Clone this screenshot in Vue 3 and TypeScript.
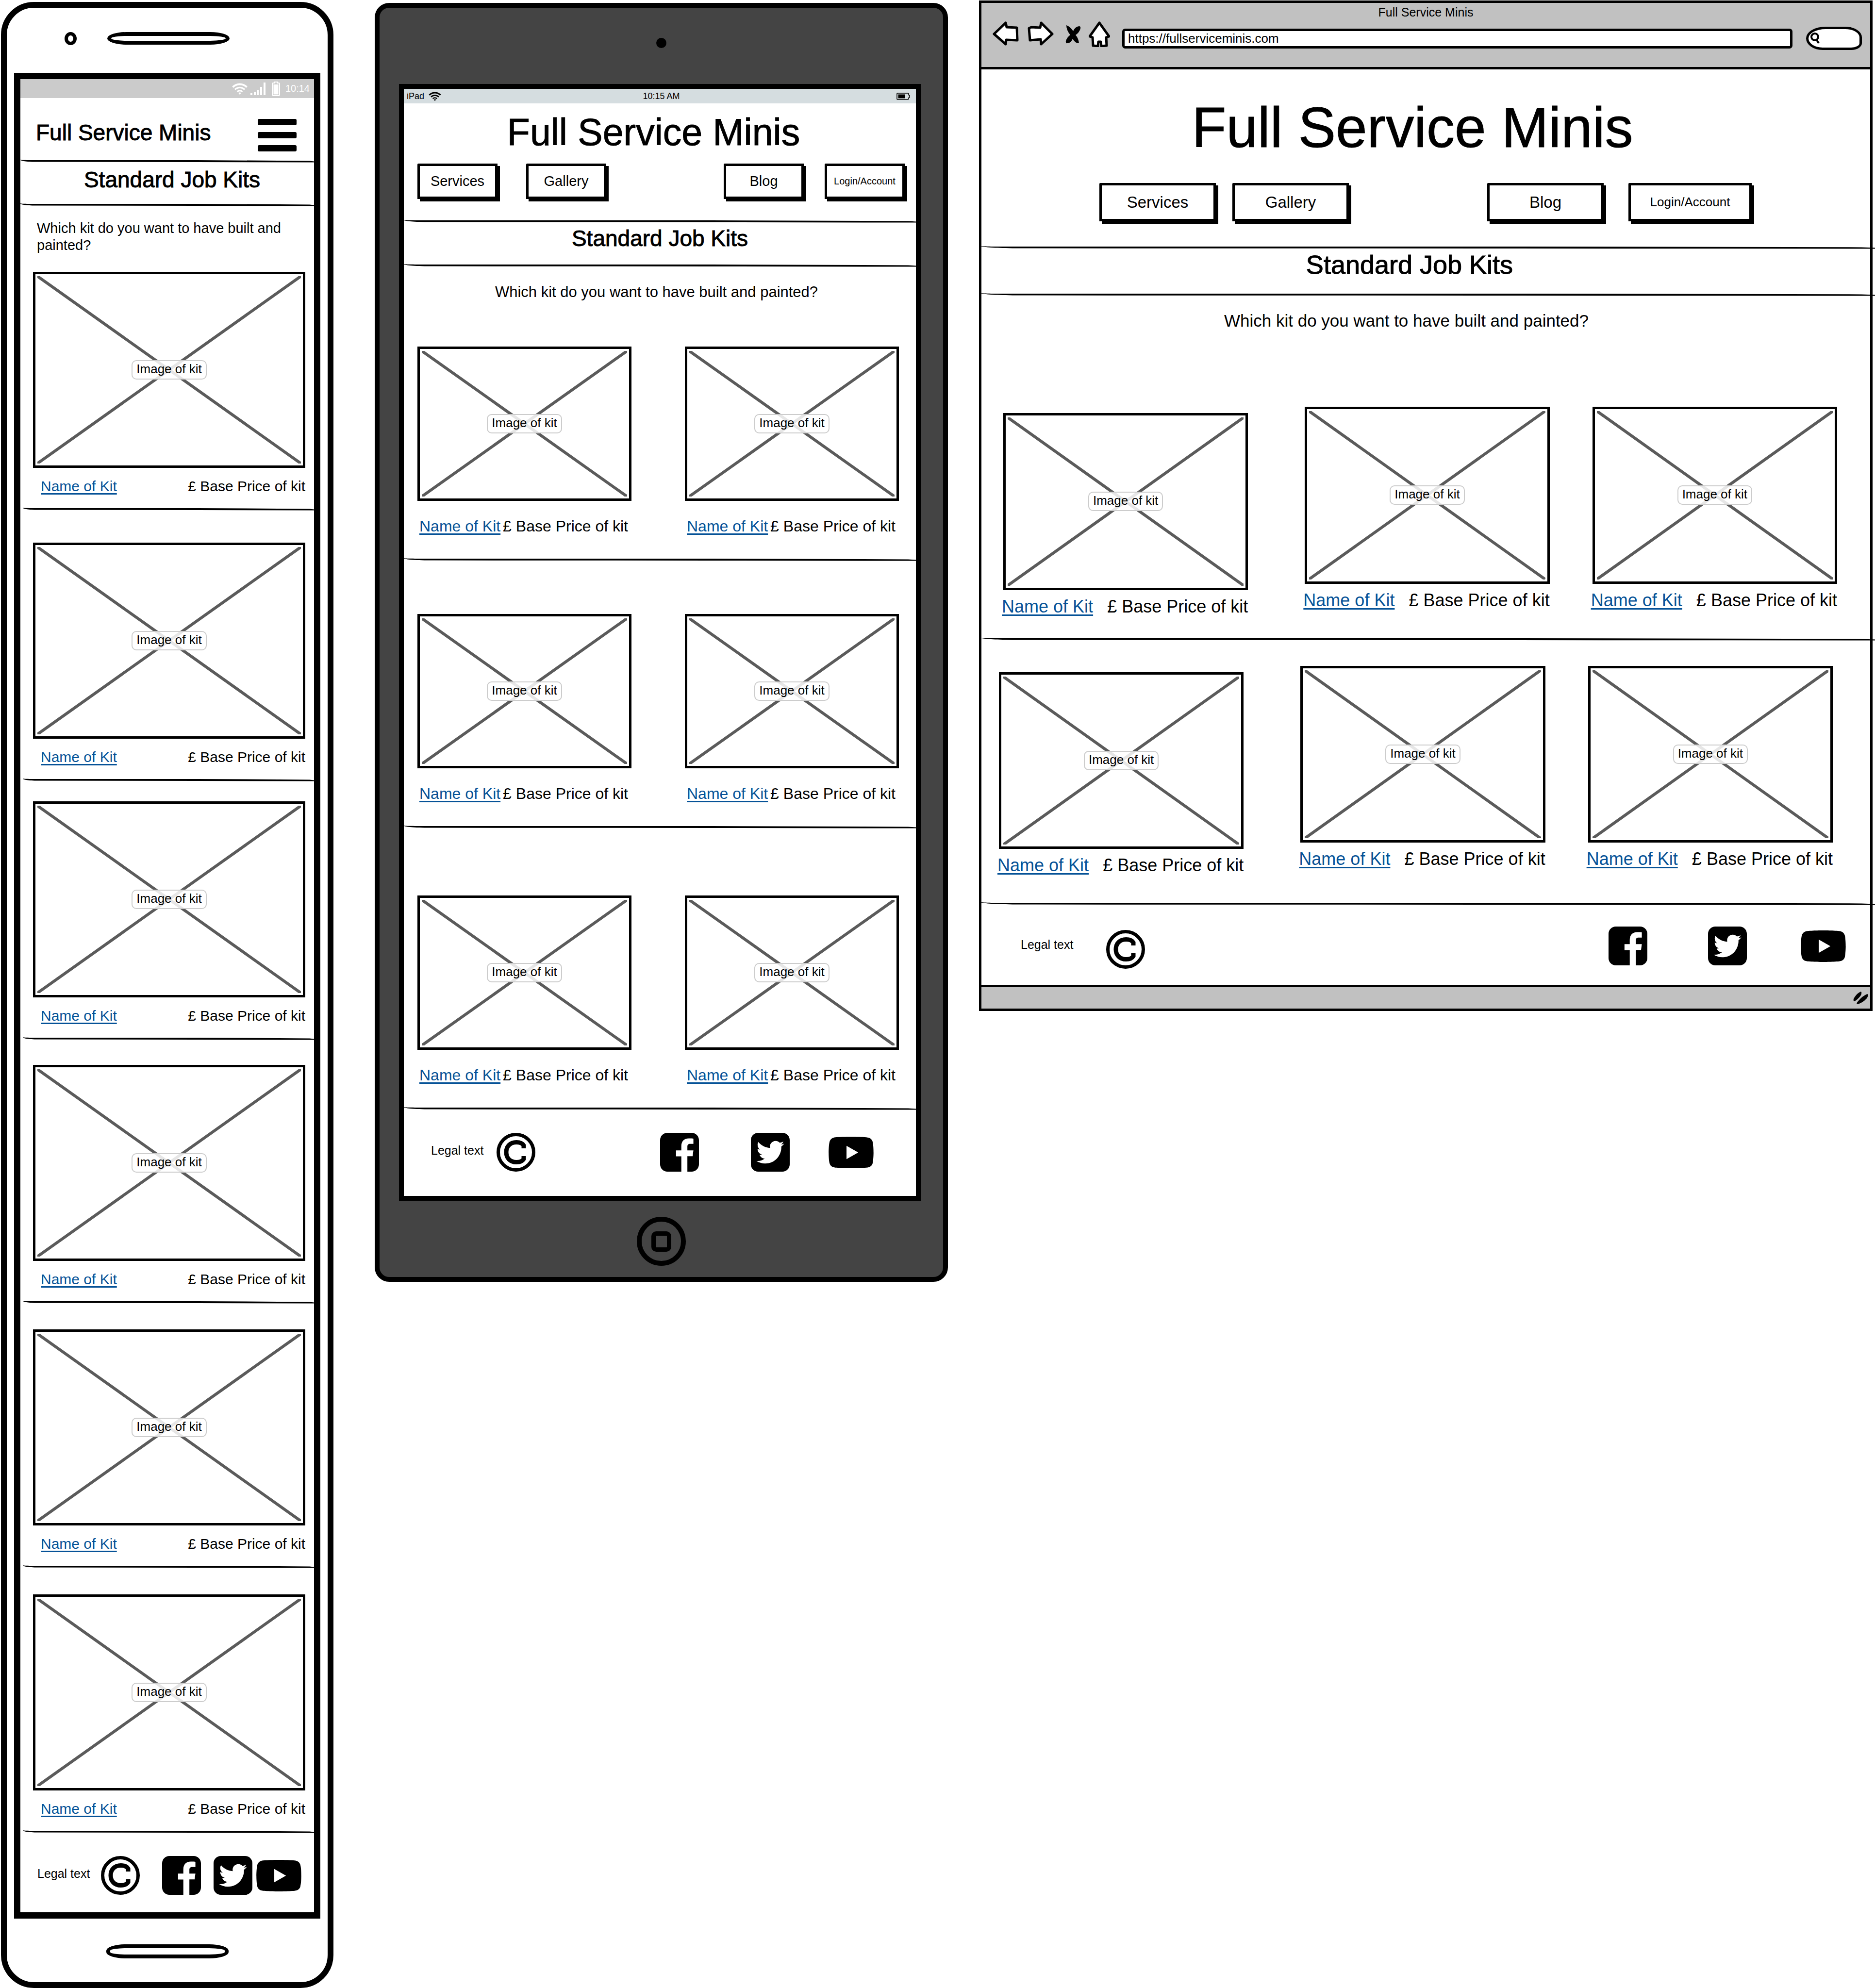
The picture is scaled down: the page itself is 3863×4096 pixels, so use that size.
<script setup lang="ts">
import { ref } from 'vue'

interface KitRow {
  above: number
  below: number
  kits: number
}

const siteName = 'Full Service Minis'
const pageTitle = 'Standard Job Kits'
const question = 'Which kit do you want to have built and painted?'

const phoneRows: KitRow[] = [0, 66, 41, 51, 53, 54].map((above) => ({ above, below: 26, kits: 1 }))
const tabletRows: KitRow[] = [0, 109, 138].map((above) => ({ above, below: 47, kits: 2 }))
const browserRows: KitRow[] = [
  { above: 0, below: 42, kits: 3 },
  { above: 52, below: 54, kits: 3 },
]

const links = ['Services', 'Gallery', 'Blog', 'Login/Account']
const socials = ['facebook', 'twitter', 'youtube']

const address = ref('https://fullserviceminis.com')
const search = ref('')

// Slightly uneven pen stroke used for every horizontal divider
const strokePath =
  'M0 .3C8 1 20 1 60 1L600 1L985 2.4L1000 3.4V5.6L600 5L60 4.6C20 4.6 8 3 0 1Z'

const rowPadding = (row: KitRow) => ({
  paddingTop: row.above + 'px',
  paddingBottom: row.below + 'px',
})
</script>

<template>
  <svg class="sprite" aria-hidden="true">
    <symbol id="copyright" viewBox="0 0 80 80">
      <circle cx="40" cy="40" r="36.5" fill="none" stroke="#000" stroke-width="7" />
      <path
        d="M56 32V26C53 21 47 19.500 41 19.500C28 19.500 20 28 20 40S28 60.500 41 60.500C47 60.500 53 59 56 54V48"
        fill="none"
        stroke="#000"
        stroke-width="9"
      />
    </symbol>
    <symbol id="facebook" viewBox="0 32 448 448">
      <path
        d="M448 116v280c0 46.4-37.6 84-84 84h-49.3V302.8h60.6l8.7-67.6h-69.3V192c0-19.6 5.4-32.9 33.5-32.9H384V98.7c-6.2-.8-27.4-2.7-52.2-2.7-51.6 0-87 31.5-87 89.4v49.9H184v67.6h60.9V480H84c-46.400 0-84-37.600-84-84V116c0-46.4 37.6-84 84-84h280c46.4 0 84 37.6 84 84z"
      />
    </symbol>
    <symbol id="twitter" viewBox="0 32 448 448">
      <path
        d="M364 32H84C37.6 32 0 69.6 0 116v280c0 46.4 37.6 84 84 84h280c46.4 0 84-37.6 84-84V116c0-46.4-37.600-84-84-84zM351.1 190.8c.2 2.8.2 5.7.2 8.5 0 86.7-66 186.6-186.6 186.6-37.2 0-71.7-10.8-100.7-29.4 5.3.6 10.4.8 15.8.8 30.7 0 58.9-10.4 81.4-28-28.8-.6-53-19.5-61.3-45.5 10.1 1.5 19.2 1.5 29.6-1.2-30-6.1-52.5-32.5-52.5-64.4v-.8c8.7 4.9 18.9 7.9 29.6 8.3a65.447 65.447 0 0 1-29.2-54.6c0-12.2 3.2-23.4 8.9-33.1 32.3 39.8 80.8 65.8 135.2 68.6-9.3-44.5 24-80.6 64-80.6 18.9 0 35.9 7.9 47.9 20.7 14.8-2.8 29-8.3 41.6-15.8-4.9 15.2-15.2 28-28.8 36.1 13.2-1.4 26-5.1 37.8-10.2-8.9 13.1-20.1 24.7-32.9 34z"
      />
    </symbol>
    <symbol id="youtube" viewBox="14.9 64 546.2 384">
      <path
        d="M549.655 124.083c-6.281-23.65-24.787-42.276-48.284-48.597C458.781 64 288 64 288 64S117.22 64 74.629 75.486c-23.497 6.322-42.003 24.947-48.284 48.597-11.412 42.867-11.412 132.305-11.412 132.305s0 89.438 11.412 132.305c6.281 23.65 24.787 41.5 48.284 47.821C117.22 448 288 448 288 448s170.78 0 213.371-11.486c23.497-6.321 42.003-24.171 48.284-47.821 11.412-42.867 11.412-132.305 11.412-132.305s0-89.438-11.412-132.305zm-317.51 213.508V175.185l142.739 81.205-142.739 81.201z"
      />
    </symbol>
    <symbol id="wifi" viewBox="0 0 32 24">
      <g fill="none" stroke="currentColor">
        <path d="M1.5 8.5C10 .5 22 .5 30.5 8.5" stroke-width="4" />
        <path d="M6 13.5C12 8 20 8 26 13.5" stroke-width="3.4" />
        <path d="M10.5 18C14 15 18 15 21.5 18" stroke-width="3" />
      </g>
      <path d="M13 20.5Q16 18.6 19 20.5L16 24Z" fill="currentColor" />
    </symbol>
  </svg>

  <main class="board">
    <!-- Phone -->
    <section class="phone">
      <div class="phone-top">
        <span class="phone-camera"></span>
        <span class="slot"></span>
      </div>
      <div class="screen">
        <div class="status">
          <svg class="phone-wifi"><use href="#wifi" /></svg>
          <svg class="phone-signal" viewBox="0 0 31 26" fill="#fff">
            <path d="M0 22h4v4H0zM7 19.500h4V26H7zM13 15h4v11h-4zM20 9h4v17h-4zM27 0h4v26h-4z" />
          </svg>
          <svg class="phone-battery" viewBox="0 0 17 30">
            <path
              d="M1 5Q1 3 3 3H5V1H12V3H14Q16 3 16 5V27Q16 29 14 29H3Q1 29 1 27Z"
              fill="none"
              stroke="#fff"
              stroke-width="2"
            />
            <path d="M3.500 6H13.500V26.500H3.500Z" fill="#fff" />
          </svg>
          <span>10:14</span>
        </div>
        <header class="phone-header">
          <h1>{{ siteName }}</h1>
          <button class="burger" type="button" aria-label="Menu">
            <span></span><span></span><span></span>
          </button>
        </header>
        <svg class="rule" viewBox="0 0 1000 6" preserveAspectRatio="none"><path :d="strokePath" /></svg>
        <h2>{{ pageTitle }}</h2>
        <svg class="rule" viewBox="0 0 1000 6" preserveAspectRatio="none"><path :d="strokePath" /></svg>
        <p class="question">{{ question }}</p>
        <template v-for="(row, r) in phoneRows" :key="r">
          <div class="row" :style="rowPadding(row)">
            <article v-for="k in row.kits" :key="k" class="kit">
              <div class="picture">
                <svg viewBox="0 0 100 100" preserveAspectRatio="none">
                  <path d="M0 0L100 100M100 0L0 100" vector-effect="non-scaling-stroke" />
                </svg>
                <span>Image of kit</span>
              </div>
              <div class="caption"><a href="#">Name of Kit</a><span>£ Base Price of kit</span></div>
            </article>
          </div>
          <svg class="rule inset" viewBox="0 0 1000 6" preserveAspectRatio="none"><path :d="strokePath" /></svg>
        </template>
        <footer class="footer">
          <div class="legal">
            <span>Legal text</span>
            <svg class="icon"><use href="#copyright" /></svg>
          </div>
          <nav class="social">
            <a v-for="s in socials" :key="s" href="#" :class="s" :aria-label="s">
              <svg><use :href="'#' + s" /></svg>
            </a>
          </nav>
        </footer>
      </div>
      <div class="phone-bottom"><span class="slot"></span></div>
    </section>

    <!-- Tablet -->
    <section class="tablet">
      <div class="tablet-top"><span class="tablet-camera"></span></div>
      <div class="screen">
        <div class="status">
          <div class="carrier">
            <span>iPad</span>
            <svg class="tablet-wifi"><use href="#wifi" /></svg>
          </div>
          <span>10:15 AM</span>
          <svg class="tablet-battery" viewBox="0 0 28 15">
            <path
              d="M2 1H23Q25 1 25 3V4.500L27 6V9.500L25 10.500V12Q25 14 23 14H2Q1 14 1 13V2Q1 1 2 1Z"
              fill="none"
              stroke="#000"
              stroke-width="1.600"
            />
            <path d="M3.500 3.500H18V11.500H3.500Z" />
          </svg>
        </div>
        <h1>{{ siteName }}</h1>
        <nav class="menu">
          <button v-for="l in links" :key="l" type="button">{{ l }}</button>
        </nav>
        <svg class="rule" viewBox="0 0 1000 6" preserveAspectRatio="none"><path :d="strokePath" /></svg>
        <h2>{{ pageTitle }}</h2>
        <svg class="rule" viewBox="0 0 1000 6" preserveAspectRatio="none"><path :d="strokePath" /></svg>
        <p class="question">{{ question }}</p>
        <template v-for="(row, r) in tabletRows" :key="r">
          <div class="row" :style="rowPadding(row)">
            <article v-for="k in row.kits" :key="k" class="kit">
              <div class="picture">
                <svg viewBox="0 0 100 100" preserveAspectRatio="none">
                  <path d="M0 0L100 100M100 0L0 100" vector-effect="non-scaling-stroke" />
                </svg>
                <span>Image of kit</span>
              </div>
              <div class="caption"><a href="#">Name of Kit</a><span>£ Base Price of kit</span></div>
            </article>
          </div>
          <svg class="rule" viewBox="0 0 1000 6" preserveAspectRatio="none"><path :d="strokePath" /></svg>
        </template>
        <footer class="footer">
          <div class="legal">
            <span>Legal text</span>
            <svg class="icon"><use href="#copyright" /></svg>
          </div>
          <nav class="social">
            <a v-for="s in socials" :key="s" href="#" :class="s" :aria-label="s">
              <svg><use :href="'#' + s" /></svg>
            </a>
          </nav>
        </footer>
      </div>
      <div class="tablet-bottom">
        <button class="home" type="button" aria-label="Home"><span></span></button>
      </div>
    </section>

    <!-- Desktop browser -->
    <section class="browser">
      <div class="toolbar">
        <p>{{ siteName }}</p>
        <div class="controls">
          <button class="back" type="button" aria-label="Back">
            <svg viewBox="0 0 54 50">
              <path d="M3 26L27 3L29 12L50 13L51 39L28 38L27 47Z" />
            </svg>
          </button>
          <button class="forward" type="button" aria-label="Forward">
            <svg viewBox="0 0 54 50">
              <path d="M51 26L28 47L27 37L5 39L3 14L8 12L26 13L28 3Z" />
            </svg>
          </button>
          <button class="stop" type="button" aria-label="Stop">
            <svg viewBox="0 0 32 38">
              <path
                class="solid"
                d="M2 0Q9 2 16 12Q20 3 28 2Q32 2 31 7Q28 16 21 20Q27 27 28 37Q21 38 15 28Q11 37 4 37Q0 38 1 32Q4 24 10 20Q2 10 2 0Z"
              />
            </svg>
          </button>
          <button class="start" type="button" aria-label="Home page">
            <svg viewBox="0 0 44 53">
              <path d="M22 3L42 31L36 33L37 50L26 51L25 42H20L19 51L9 50L8 33L2 31Z" />
            </svg>
          </button>
          <div class="fields">
            <label class="address"><input v-model="address" type="text" aria-label="Address" /></label>
            <label class="search">
              <svg viewBox="0 0 20 24">
                <circle cx="9" cy="9" r="7" />
                <path d="M12 14L17 22" />
              </svg>
              <input v-model="search" type="text" aria-label="Search" />
            </label>
          </div>
        </div>
      </div>
      <h1>{{ siteName }}</h1>
      <nav class="menu">
        <button v-for="l in links" :key="l" type="button">{{ l }}</button>
      </nav>
      <svg class="rule" viewBox="0 0 1000 6" preserveAspectRatio="none"><path :d="strokePath" /></svg>
      <h2>{{ pageTitle }}</h2>
      <svg class="rule" viewBox="0 0 1000 6" preserveAspectRatio="none"><path :d="strokePath" /></svg>
      <p class="question">{{ question }}</p>
      <template v-for="(row, r) in browserRows" :key="r">
        <div class="row" :style="rowPadding(row)">
          <article v-for="k in row.kits" :key="k" class="kit">
            <div class="picture">
              <svg viewBox="0 0 100 100" preserveAspectRatio="none">
                <path d="M0 0L100 100M100 0L0 100" vector-effect="non-scaling-stroke" />
              </svg>
              <span>Image of kit</span>
            </div>
            <div class="caption"><a href="#">Name of Kit</a><span>£ Base Price of kit</span></div>
          </article>
        </div>
        <svg class="rule" viewBox="0 0 1000 6" preserveAspectRatio="none"><path :d="strokePath" /></svg>
      </template>
      <footer class="footer">
        <div class="legal">
          <span>Legal text</span>
          <svg class="icon"><use href="#copyright" /></svg>
        </div>
        <nav class="social">
          <a v-for="s in socials" :key="s" href="#" :class="s" :aria-label="s">
            <svg><use :href="'#' + s" /></svg>
          </a>
        </nav>
      </footer>
      <div class="bottom-bar">
        <svg viewBox="0 0 32 26">
          <path d="M16 0Q19 2 15 9Q8 18 2 20Q-1 18 2 13Q8 3 16 0ZM29 5Q33 6 28 14Q19 24 8 26Q6 24 10 20Q19 9 29 5Z" />
        </svg>
      </div>
    </section>
  </main>
</template>

<style>
body {
  margin: 0;
  background: #fff;
}
</style>

<style scoped>
.sprite {
  position: absolute;
  width: 0;
  height: 0;
}

.board {
  display: grid;
  grid-template-columns: 687fr 1266fr 1905fr;
  align-items: start;
  box-sizing: border-box;
  padding-right: 5px;
  color: #000;
  font-family: 'Liberation Sans', Arial, sans-serif;
}

.board * {
  box-sizing: border-box;
}

h1,
h2,
p {
  margin: 0;
  font-weight: 400;
}

h1,
h2,
.question {
  text-align: center;
}

h1,
h2 {
  -webkit-text-stroke: 1px currentColor;
}

svg {
  display: block;
}

button {
  margin: 0;
  padding: 0;
  border: 0;
  background: none;
  color: inherit;
  font-family: inherit;
}

.rule {
  width: 100%;
  height: 6px;
}

/* Kits */
.kit {
  min-width: 0;
}

.picture {
  position: relative;
  display: grid;
  place-items: center;
  border: 5px solid #000;
}

.picture svg {
  position: absolute;
  inset: 4px;
  width: calc(100% - 8px);
  height: calc(100% - 8px);
}

.picture path {
  fill: none;
  stroke: #5b5b5b;
  stroke-width: 6px;
}

.picture span {
  position: relative;
  padding: 3px 8px 7px;
  border: 2px solid #ccc;
  border-radius: 10px;
  background: rgba(255, 255, 255, 0.85);
  font-size: 26px;
  line-height: 26px;
  white-space: nowrap;
}

.caption {
  display: flex;
  justify-content: space-between;
  white-space: nowrap;
}

.caption a {
  color: #055297;
  text-decoration: underline;
  text-decoration-thickness: 3px;
  text-underline-offset: 4px;
  text-decoration-skip-ink: none;
}

/* Menu buttons */
.menu {
  display: flex;
}

.menu button {
  border: 5px solid #000;
  background: #fff;
  box-shadow: 5px 5px 0 #000;
  border-radius: 2px 0 0 0;
}

.menu button:nth-child(3) {
  margin-left: auto;
}

/* Footer */
.footer {
  display: flex;
  justify-content: space-between;
  align-items: flex-start;
}

.legal {
  display: flex;
  align-items: flex-start;
  font-size: 25px;
  line-height: 72px;
  white-space: nowrap;
}

.legal .icon,
.facebook svg,
.twitter svg {
  width: 80px;
  height: 80px;
}

.youtube svg {
  width: 93px;
  height: 65px;
}

.social {
  display: flex;
  align-items: center;
}

/* Phone */
.phone {
  margin: 4px 0 0 2px;
  border: 12px solid #000;
  border-radius: 68px;
}

.phone-top {
  display: flex;
  gap: 63px;
  height: 134px;
  padding: 50px 0 0 119px;
}

.phone-camera {
  width: 25px;
  height: 27px;
  border: 7px solid #000;
  border-radius: 50%;
}

.slot {
  width: 252px;
  height: 26px;
  border: 8px solid #000;
  border-radius: 40px / 13px;
}

.phone .screen {
  margin: 0 15px;
  border: 13px solid #000;
}

.phone .status {
  display: flex;
  align-items: center;
  justify-content: flex-end;
  height: 39px;
  padding-right: 9px;
  background: #cbcbcb;
  color: #fff;
  font-size: 20px;
}

.phone-wifi {
  width: 32px;
  height: 24px;
}

.phone-signal {
  width: 31px;
  height: 26px;
  margin: 0 13px 0 6px;
}

.phone-battery {
  width: 17px;
  height: 30px;
  margin-right: 11px;
}

.phone-header {
  display: flex;
  justify-content: space-between;
  align-items: flex-start;
  height: 127px;
  padding: 43px 36px 0 32px;
}

.phone h1 {
  font-size: 46px;
  line-height: 56px;
}

.burger {
  display: flex;
  flex-direction: column;
  gap: 14px;
  width: 80px;
}

.burger span {
  height: 13px;
  border-radius: 3px;
  background: #000;
}

.phone h2 {
  padding: 0 0 14px 20px;
  font-size: 46px;
  line-height: 70px;
}

.phone .question {
  padding: 28px 34px 37px;
  font-size: 29px;
  line-height: 35px;
  text-align: left;
}

.phone .inset {
  width: calc(100% - 5px);
  margin-left: 5px;
}

.phone .row {
  padding-left: 26px;
  padding-right: 18px;
}

.phone .picture {
  aspect-ratio: 561 / 404;
}

.phone .caption {
  padding: 20px 0 0 16px;
  font-size: 30px;
  line-height: 36px;
}

.phone .footer {
  padding: 47px 26px 36px 35px;
}

.phone .legal {
  gap: 23px;
}

.phone .twitter {
  margin: 0 8px 0 26px;
}

.phone-bottom {
  display: flex;
  justify-content: center;
  height: 131px;
  padding-top: 53px;
}

.phone-bottom .slot {
  height: 29px;
}

/* Tablet */
.tablet {
  margin: 6px 0 0 85px;
  border: 10px solid #000;
  border-radius: 30px;
  background: #444;
}

.tablet-top {
  display: flex;
  justify-content: center;
  height: 157px;
  padding-top: 62px;
}

.tablet-camera {
  width: 21px;
  height: 21px;
  border-radius: 50%;
  background: #000;
}

.tablet .screen {
  margin: 0 46px 0 40px;
  border: 10px solid #000;
  background: #fff;
}

.tablet .status {
  display: grid;
  grid-template-columns: 1fr auto 1fr;
  align-items: center;
  height: 30px;
  padding-left: 6px;
  background: #d5dde0;
  font-size: 18px;
  line-height: 30px;
}

.carrier {
  display: flex;
  align-items: center;
  gap: 9px;
}

.tablet-wifi {
  width: 26px;
  height: 19px;
}

.tablet-battery {
  width: 28px;
  height: 15px;
  margin-right: 12px;
  justify-self: end;
}

.tablet h1 {
  padding: 15px 26px 21px 0;
  font-size: 77px;
  line-height: 88px;
}

.tablet .menu {
  padding: 0 23px 43px 28px;
}

.tablet .menu button {
  width: 165px;
  height: 73px;
  font-size: 29px;
}

.tablet .menu button:nth-child(2) {
  margin-left: 59px;
}

.tablet .menu button:last-child {
  margin-left: 43px;
  font-size: 20px;
}

.tablet h2 {
  padding-bottom: 21px;
  font-size: 46px;
  line-height: 64px;
}

.tablet .question {
  padding: 33px 14px 93px 0;
  font-size: 31px;
  line-height: 38px;
}

.tablet .row {
  display: grid;
  grid-template-columns: 1fr 1fr;
  column-gap: 110px;
  padding-left: 28px;
  padding-right: 35px;
}

.tablet .picture {
  aspect-ratio: 441 / 318;
}

.tablet .caption {
  padding: 33px 7px 0 4px;
  font-size: 32px;
  line-height: 38px;
}

.tablet .footer {
  padding: 47px 87px 50px 56px;
}

.tablet .legal {
  gap: 27px;
}

.tablet .twitter {
  margin: 0 80px 0 107px;
}

.tablet-bottom {
  display: flex;
  justify-content: center;
  padding: 33px 0 23px;
}

.home {
  display: grid;
  place-items: center;
  width: 101px;
  height: 101px;
  border: 10px solid #000;
  border-radius: 50%;
}

.home span {
  width: 41px;
  height: 42px;
  border: 9px solid #000;
  border-radius: 10px;
}

/* Browser window */
.browser {
  margin: 1px 0 0 64px;
  border: 5px solid #000;
}

.toolbar {
  height: 137px;
  padding-top: 4px;
  border-bottom: 5px solid #000;
  background: #c1c1c1;
}

.toolbar p {
  font-size: 25px;
  line-height: 30px;
  text-align: center;
}

.controls {
  display: flex;
  align-items: flex-start;
  padding: 4px 17px 0 23px;
}

.controls button path {
  fill: #fff;
  stroke: #000;
  stroke-width: 5px;
  stroke-linejoin: round;
}

.back svg,
.forward svg {
  width: 54px;
  height: 50px;
}

.back {
  margin-right: 18px;
}

.forward {
  margin-right: 24px;
}

.stop {
  padding-top: 8px;
  margin-right: 16px;
}

.stop svg {
  width: 32px;
  height: 38px;
}

.controls .stop .solid {
  fill: #000;
  stroke: none;
}

.start {
  margin-right: 25px;
}

.start svg {
  width: 44px;
  height: 53px;
}

.fields {
  display: flex;
  flex: 1;
  gap: 28px;
  align-items: center;
  padding-top: 11px;
}

.address {
  display: flex;
  flex: 1;
}

input {
  min-width: 0;
  border: 0;
  background: none;
  color: inherit;
  font-family: inherit;
  outline: 0;
}

.address input {
  flex: 1;
  height: 41px;
  padding: 0 7px;
  border: 5px solid #000;
  border-radius: 6px;
  background: #fff;
  font-size: 26px;
}

.search {
  display: flex;
  align-items: center;
  width: 115px;
  height: 48px;
  padding-left: 4px;
  border: 5px solid #000;
  border-radius: 40px 34px 22px 34px / 24px 22px 14px 24px;
  background: #fff;
}

.search svg {
  width: 20px;
  height: 24px;
  fill: none;
  stroke: #000;
  stroke-width: 4px;
}

.search input {
  width: 70px;
}

.browser h1 {
  padding: 55px 55px 49px 0;
  font-size: 116px;
  line-height: 130px;
}

.browser .menu {
  padding: 0 244px 51px 243px;
}

.browser .menu button {
  width: 240px;
  height: 79px;
  font-size: 33px;
}

.browser .menu button:nth-child(2) {
  margin-left: 34px;
}

.browser .menu button:last-child {
  width: 254px;
  margin-left: 51px;
  font-size: 26px;
}

.browser .rule {
  width: calc(100% + 10px);
}

.browser h2 {
  padding: 0 67px 27px 0;
  font-size: 54px;
  line-height: 64px;
}

.browser .question {
  padding: 30px 80px 156px 0;
  font-size: 35px;
  line-height: 42px;
}

.browser .row {
  display: grid;
  grid-template-columns: 1fr 117px 1fr 88px 1fr;
  padding-left: 45px;
  padding-right: 68px;
}

.browser .row ~ .row {
  padding-left: 36px;
  padding-right: 77px;
}

.browser .kit:first-child {
  padding-top: 13px;
}

.browser .kit:nth-child(2) {
  grid-column: 3;
}

.browser .kit:nth-child(3) {
  grid-column: 5;
}

.browser .picture {
  aspect-ratio: 505 / 365;
}

.browser .caption {
  margin-left: -3px;
  padding-top: 12px;
  font-size: 36px;
  line-height: 44px;
}

.browser .footer {
  padding: 44px 50px 40px 81px;
}

.browser .legal {
  gap: 68px;
  padding-top: 7px;
  margin-bottom: -7px;
  line-height: 60px;
}

.browser .twitter {
  margin: 0 111px 0 125px;
}

.bottom-bar {
  display: flex;
  justify-content: flex-end;
  align-items: center;
  height: 49px;
  padding-right: 3px;
  border-top: 5px solid #000;
  background: #c1c1c1;
}

.bottom-bar svg {
  width: 32px;
  height: 26px;
}
</style>
